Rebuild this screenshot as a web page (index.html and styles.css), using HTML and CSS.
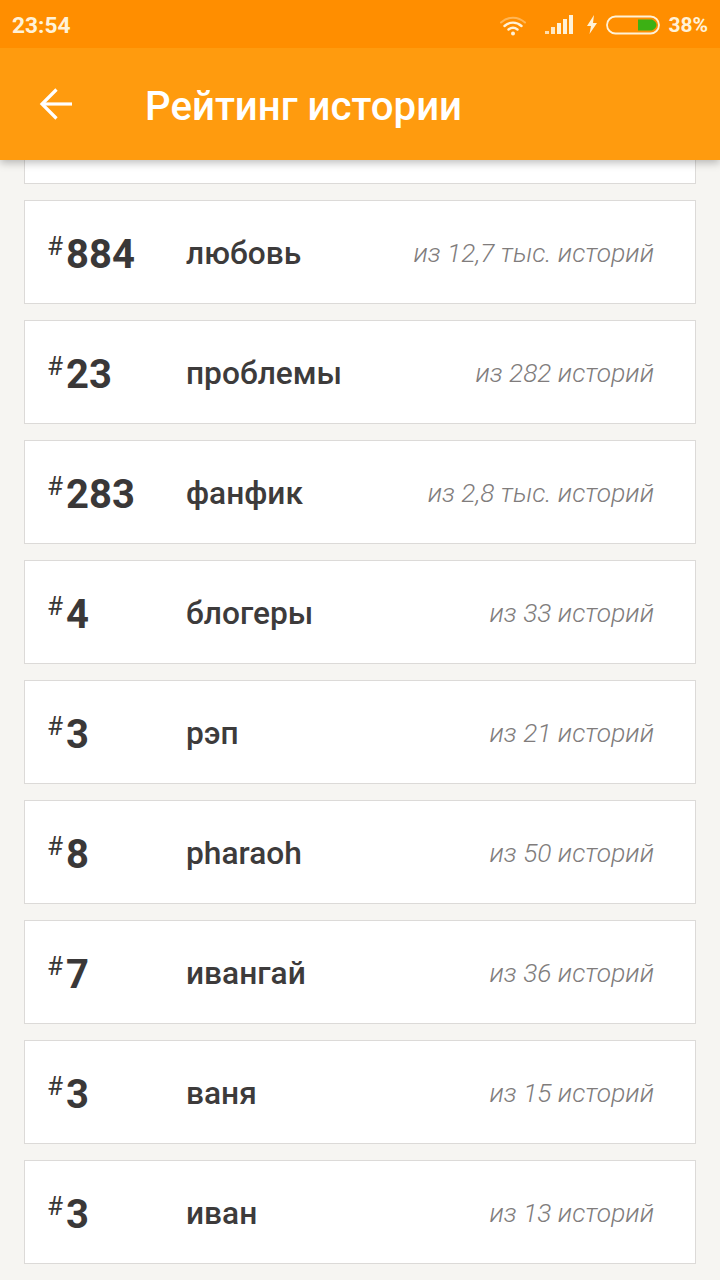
FILE: index.html
```html
<!DOCTYPE html>
<html lang="ru">
<head>
<meta charset="utf-8">
<title>Рейтинг истории</title>
<link rel="stylesheet" href="styles.css">
</head>
<body>
<header class="header">
  <div class="status">
    <span class="time">23:54</span>
    <div class="status-icons">
      <svg class="wifi" width="28" height="24" viewBox="0 0 28 24" fill="none" stroke="#fff2d8" stroke-linecap="round">
        <path d="M2 9.5C9 3 19 3 26 9.5" stroke-width="2" opacity=".4"/>
        <path d="M5.5 13C10.5 8.5 17.5 8.5 22.5 13" stroke-width="2.4"/>
        <path d="M9.5 16.5C12.3 14.3 15.7 14.3 18.500 16.5" stroke-width="2.4"/>
        <circle cx="14" cy="20.500" r="2" fill="#fff2d8" stroke="none"/>
      </svg>
      <svg class="signal" width="30" height="22" viewBox="0 0 30 22" fill="#fff2d8">
        <rect x="0" y="17" width="4" height="3" opacity=".8"/>
        <rect x="6" y="13" width="4" height="7" opacity=".9"/>
        <rect x="12" y="9" width="4" height="11"/>
        <rect x="18" y="5" width="4" height="15"/>
        <rect x="24" y="1" width="4" height="19"/>
      </svg>
      <svg class="bolt" width="12" height="20" viewBox="0 0 12 20" fill="#fff2d8">
        <path d="M8 0L1 11H5L3.500 19L11 8H7Z"/>
      </svg>
      <svg class="battery" width="54" height="20" viewBox="0 0 54 20">
        <rect x="1" y="1.500" width="52" height="17" rx="8.500" fill="none" stroke="#fff2d8" stroke-width="1.800"/>
        <path d="M32 4.500H46C49 6 50.500 8 50.500 10C50.500 12 49 14 46 15.500H32Z" fill="#3cb014"/>
      </svg>
      <span class="percent">38%</span>
    </div>
  </div>
  <div class="toolbar">
    <svg class="back" width="36" height="36" viewBox="0 0 36 36" fill="none" stroke="#fff" stroke-width="3.200">
      <path d="M34 18H4"/>
      <path d="M18.500 3.500L4 18L18.500 32.500"/>
    </svg>
    <h1 class="title">Рейтинг истории</h1>
  </div>
</header>
<main class="list">
  <div class="card card-stub"></div>
  <div class="card"><span class="rank"><sup class="hash">#</sup>884</span><span class="tag">любовь</span><span class="count">из 12,7 тыс. историй</span></div>
  <div class="card"><span class="rank"><sup class="hash">#</sup>23</span><span class="tag">проблемы</span><span class="count">из 282 историй</span></div>
  <div class="card"><span class="rank"><sup class="hash">#</sup>283</span><span class="tag">фанфик</span><span class="count">из 2,8 тыс. историй</span></div>
  <div class="card"><span class="rank"><sup class="hash">#</sup>4</span><span class="tag">блогеры</span><span class="count">из 33 историй</span></div>
  <div class="card"><span class="rank"><sup class="hash">#</sup>3</span><span class="tag">рэп</span><span class="count">из 21 историй</span></div>
  <div class="card"><span class="rank"><sup class="hash">#</sup>8</span><span class="tag">pharaoh</span><span class="count">из 50 историй</span></div>
  <div class="card"><span class="rank"><sup class="hash">#</sup>7</span><span class="tag">ивангай</span><span class="count">из 36 историй</span></div>
  <div class="card"><span class="rank"><sup class="hash">#</sup>3</span><span class="tag">ваня</span><span class="count">из 15 историй</span></div>
  <div class="card"><span class="rank"><sup class="hash">#</sup>3</span><span class="tag">иван</span><span class="count">из 13 историй</span></div>
</main>
</body>
</html>
```
FILE: styles.css
```css
* { box-sizing: border-box; }
html, body { margin: 0; height: 1280px; overflow: hidden; }
body { background: #f6f5f2; font-family: Roboto, "Noto Sans", sans-serif; color: #3a3838; }

.header { position: relative; z-index: 2; box-shadow: 0 3px 8px rgba(0,0,0,.25); }
.status { height: 48px; background: #ff8e00; display: flex; align-items: center; justify-content: space-between; padding: 2px 12px 0; color: #fff2d8; }
.time { font-size: 22.700px; font-weight: 700; }
.status-icons { display: flex; align-items: center; }
.wifi { margin-right: 18px; }
.signal { margin-right: 11px; }
.bolt { margin-right: 8px; }
.battery { margin-right: 8px; }
.percent { font-size: 21px; font-weight: 700; }

.toolbar { height: 112px; background: #ff9b0e; display: flex; align-items: center; padding-left: 38px; }
.back { flex: none; }
.title { margin: 7px 0 0 71px; font-size: 40.200px; font-weight: 500; color: #fff; line-height: 1; }

.list { padding: 0 24px; display: flex; flex-direction: column; gap: 16px; }
.card { height: 104px; background: #fff; border: 1px solid #dcdad8; display: flex; align-items: center; padding: 0 41px 0 22px; flex: none; }
.card-stub { height: 24px; border-top: 0; }
.rank { width: 139px; flex: none; font-size: 40px; font-weight: 700; color: #3a3838; display: flex; align-items: flex-start; line-height: 48px; padding-top: 6px; }
.hash { font-size: 26px; font-weight: 400; line-height: 28px; width: 19px; flex: none; margin-top: 1px; }
.tag { font-size: 31.700px; font-weight: 500; color: #3d3b3b; flex: none; padding-top: 3px; }
.count { margin-left: auto; font-size: 26.300px; font-weight: 300; font-style: italic; color: #807c7c; padding-top: 1px; }
```
